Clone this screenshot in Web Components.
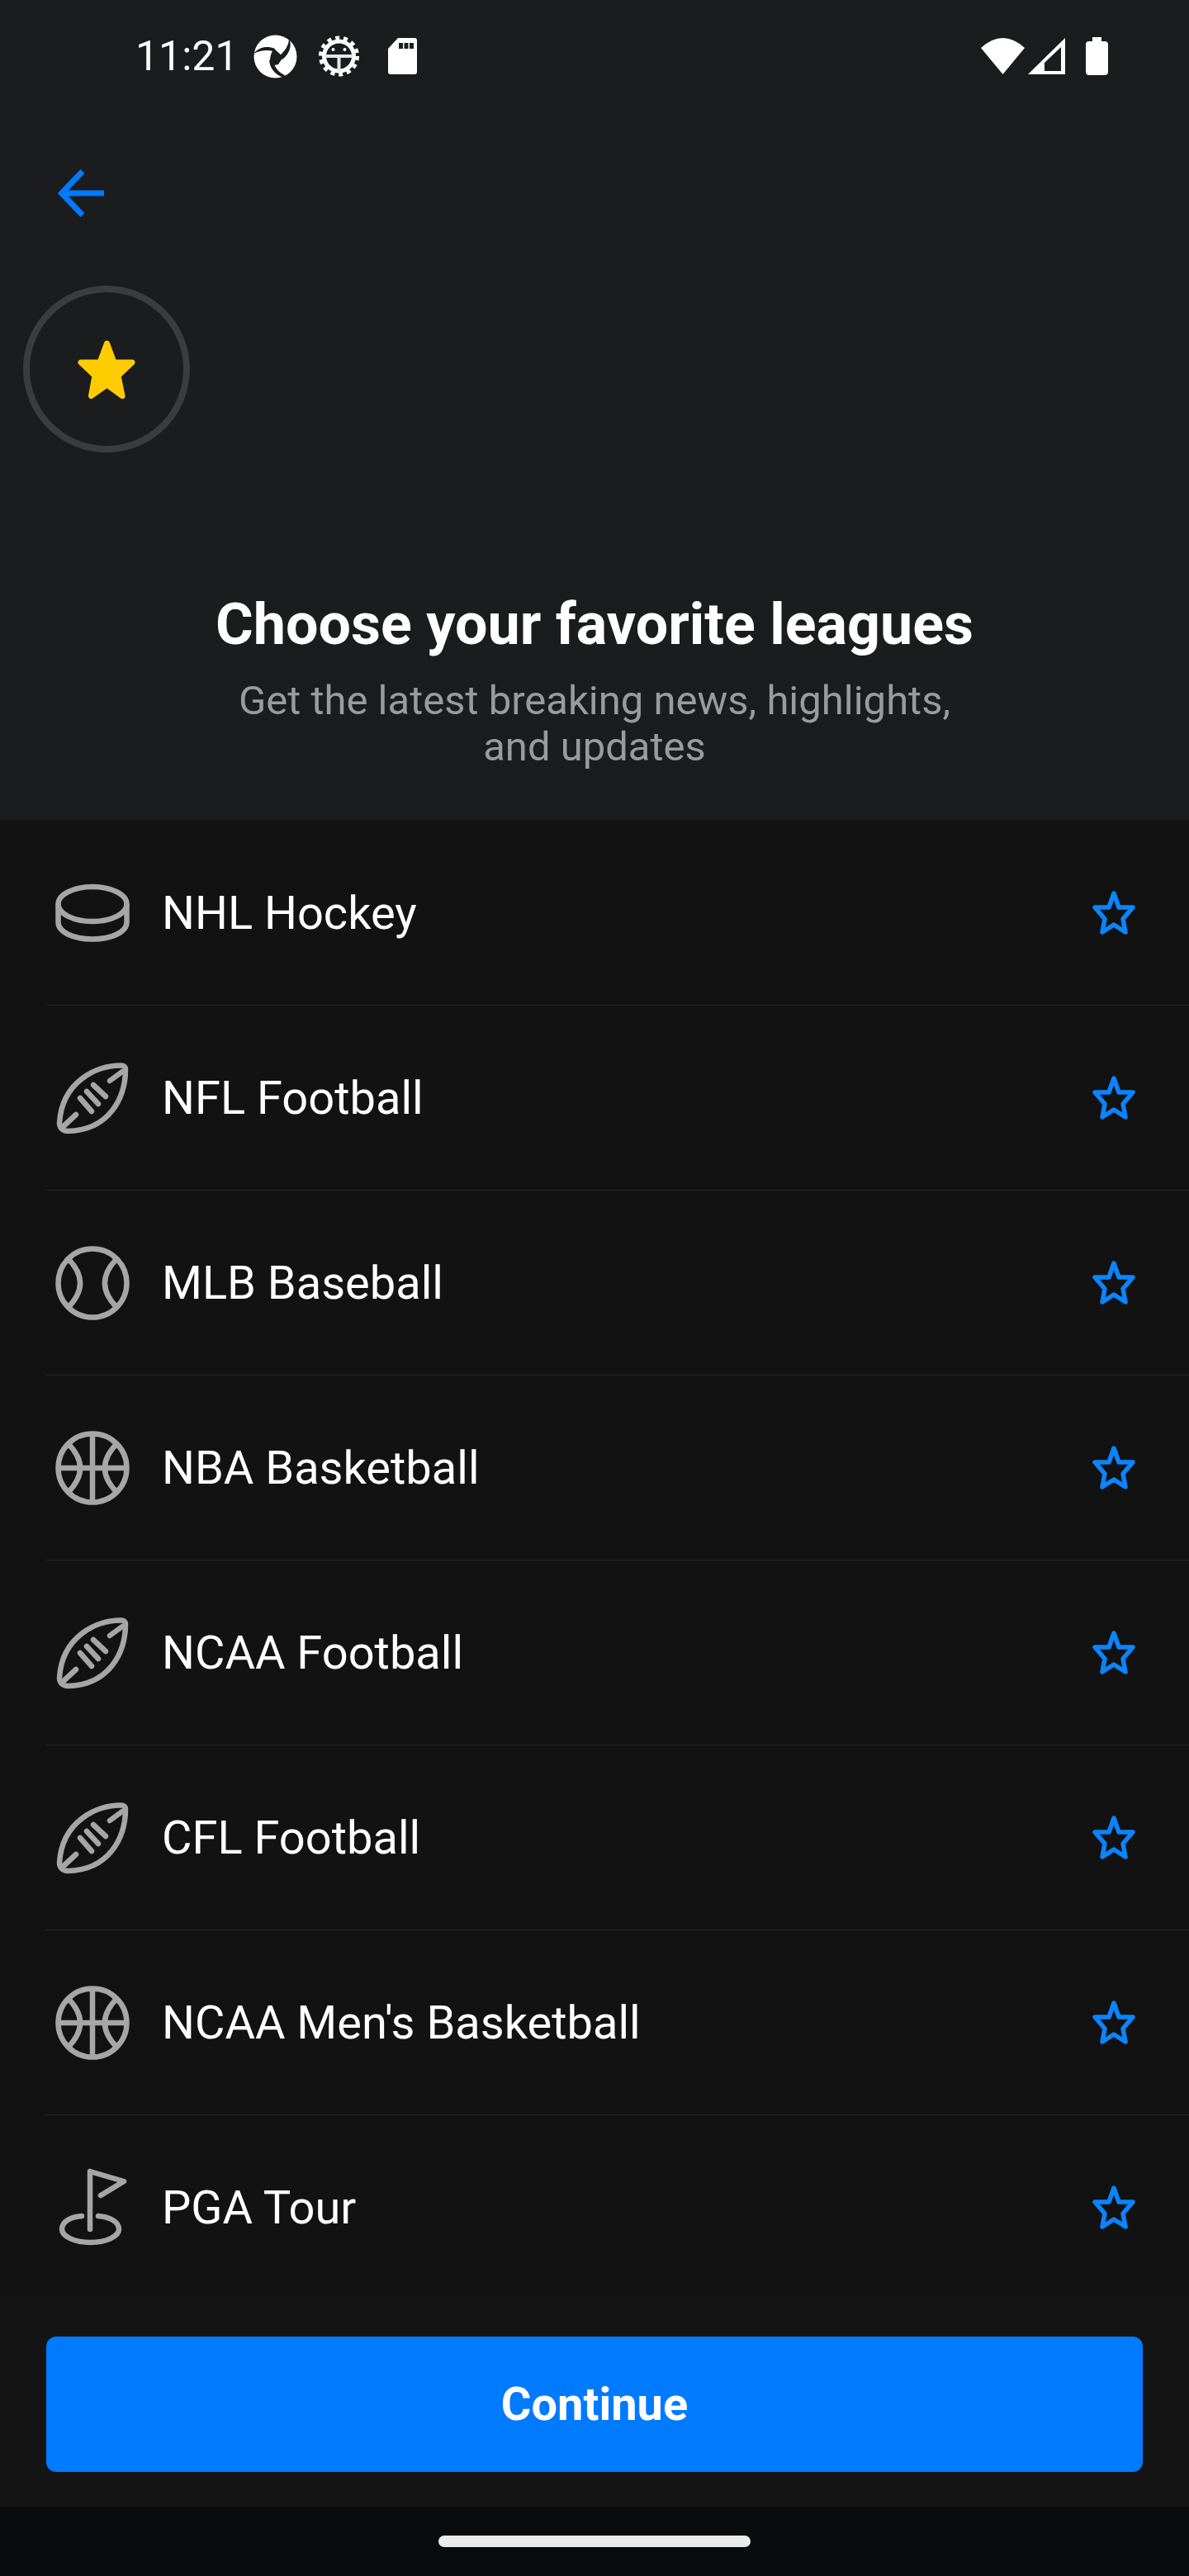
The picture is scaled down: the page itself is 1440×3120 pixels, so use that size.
<!DOCTYPE html>
<html>
<head>
<meta charset="utf-8">
<title>Choose your favorite leagues</title>
<style>
	html, body {
		margin: 0;
		background: #121212;
		font-family: Roboto, "Liberation Sans", sans-serif;
	}
</style>
</head>
<body>

<league-screen>
	<status-bar slot="top" time="11:21"></status-bar>
	<back-bar slot="top"></back-bar>
	<league-hero slot="top" heading="Choose your favorite leagues">Get the latest breaking news, highlights,<br>and updates</league-hero>

	<league-row icon="puck">NHL Hockey</league-row>
	<league-row icon="football">NFL Football</league-row>
	<league-row icon="baseball">MLB Baseball</league-row>
	<league-row icon="basketball">NBA Basketball</league-row>
	<league-row icon="football">NCAA Football</league-row>
	<league-row icon="football">CFL Football</league-row>
	<league-row icon="basketball">NCAA Men's Basketball</league-row>
	<league-row icon="golf" last>PGA Tour</league-row>

	<continue-bar slot="bottom">Continue</continue-bar>
	<nav-pill slot="bottom"></nav-pill>
</league-screen>

<script>
// ===== ICONS =====

const SPORT_ICONS = {
	puck: `
		<ellipse cx="45" cy="34" rx="41.5" ry="21"/>
		<path d="M3.5 34V56C3.5 68 22 76.5 45 76.5S86.5 68 86.5 56V34"/>`,
	football: `
		<path d="M80 5.5C50 5 8 25 5 75C5 81 9 85 15 85C65 84 85 45 85 10C85 7 83 5.5 80 5.5Z"/>
		<path d="M81 13L66 24M10 79L25 65M46 29L61 43M38 37L52 52M30 45L44 61" stroke-linecap="round"/>`,
	baseball: `
		<circle cx="45" cy="45" r="41.5"/>
		<path d="M15 15Q45 45 15 75M75 15Q45 45 75 75"/>`,
	basketball: `
		<circle cx="45" cy="45" r="41.5"/>
		<path d="M15 15Q45 45 15 75M75 15Q45 45 75 75M45 3.5V86.5M3.5 45H86.5"/>`,
	golf: `
		<path d="M42 1V71M42 1L83 13L55 30" stroke-linecap="round" stroke-linejoin="round"/>
		<path d="M32 55C18 56 8 62 8 71C8 80 24 87 42.5 87S77 80 77 71C77 62 66 56 52 55" stroke-linecap="round"/>`
}

// ===== ELEMENTS =====

class LeagueScreen extends HTMLElement {
	connectedCallback(){
		this.attachShadow({ mode: 'open' }).innerHTML = `
		<style>
			:host {
				display: block;
				width: 1440px;
				height: 3120px;
				overflow: hidden;
				background: #121212;
			}
			.top {
				height: 993px;
				background: #1b1c1e;
			}
			.list {
				padding-top: 1px;
				height: 1792px;
				box-sizing: border-box;
			}
		</style>
		<div class="top"><slot name="top"></slot></div>
		<div class="list"><slot></slot></div>
		<slot name="bottom"></slot>`
	}
}

class StatusBar extends HTMLElement {
	connectedCallback(){
		this.attachShadow({ mode: 'open' }).innerHTML = `
		<style>
			:host {
				display: flex;
				align-items: center;
				height: 136px;
				padding: 0 98px 0 164px;
				box-sizing: border-box;
				color: #fff;
			}
			.time {
				font-size: 50px;
				width: 143px;
				line-height: 1;
			}
			svg {
				display: block;
				fill: #fff;
				flex: none;
			}
			.spacer {
				flex: 1;
			}
		</style>
		<span class="time">${this.getAttribute('time')}</span>
		<svg width="53" height="53" viewBox="0 0 53 53">
			<circle cx="26.5" cy="26.5" r="26"/>
			<path fill="#1b1c1e" d="M25 17L36 27L30 36L21 38C19 31 20 23 25 17Z"/>
			<path fill="#1b1c1e" d="M43 4C47 13 44 23 35 30L31 26C38 20 43 13 43 4Z"/>
			<path fill="#1b1c1e" d="M0 23C7 15 16 13 26 17L24 20C16 18 8 19 0 23Z"/>
			<path fill="#1b1c1e" d="M19 31C20 41 26 48 36 52L38 49C31 46 25 40 24 31Z"/>
		</svg>
		<svg width="49" height="50" viewBox="0 0 49 50" style="margin-left:26px">
			<circle cx="24.5" cy="25" r="18" fill="none" stroke="#fff" stroke-width="5"/>
			<circle cx="24.5" cy="25" r="22" fill="none" stroke="#fff" stroke-width="5" stroke-dasharray="5 4.87"/>
			<rect x="8" y="23" width="33" height="4" fill="#e6e6e6"/>
			<rect x="22.5" y="25" width="4" height="19" fill="#e6e6e6"/>
			<circle cx="17.5" cy="17" r="2"/>
			<circle cx="31.5" cy="17" r="2"/>
		</svg>
		<svg width="35" height="44" viewBox="0 0 35 44" style="margin-left:35px">
			<path fill-rule="evenodd" d="M12 0H32A3 3 0 0 1 35 3V41A3 3 0 0 1 32 44H3A3 3 0 0 1 0 41V13ZM13 6V13H18V6ZM19.500 6V13H24.500V6ZM26 6V13H31V6Z"/>
		</svg>
		<span class="spacer"></span>
		<svg width="53" height="44" viewBox="0 0 53 44">
			<path d="M26.500 44L0 12Q26.500 -12 53 12Z"/>
		</svg>
		<svg width="45" height="44" viewBox="0 0 45 44" style="margin-left:4px">
			<path fill-rule="evenodd" d="M45 0V44H0ZM40 11L20 30V40H40Z"/>
		</svg>
		<svg width="27" height="46" viewBox="0 0 27 46" style="margin-left:25px">
			<path d="M8 0H19V5H23A4 4 0 0 1 27 9V42A4 4 0 0 1 23 46H4A4 4 0 0 1 0 42V9A4 4 0 0 1 4 5H8Z"/>
		</svg>`
	}
}

class BackBar extends HTMLElement {
	connectedCallback(){
		this.attachShadow({ mode: 'open' }).innerHTML = `
		<style>
			:host {
				display: flex;
				align-items: center;
				height: 196px;
				padding-left: 70px;
			}
			svg {
				display: block;
				fill: none;
				stroke: #007aff;
				stroke-width: 7;
			}
		</style>
		<svg width="56" height="58" viewBox="0 0 56 58">
			<path d="M56 29H4M30 2.500L4.500 29L30 55.500"/>
		</svg>`
	}
}

class LeagueHero extends HTMLElement {
	connectedCallback(){
		this.attachShadow({ mode: 'open' }).innerHTML = `
		<style>
			:host {
				display: block;
				padding-top: 14px;
			}
			.badge {
				width: 202px;
				height: 202px;
				margin-left: 28px;
				box-sizing: border-box;
				border: 8px solid #3b3c3e;
				border-radius: 50%;
				display: flex;
				align-items: center;
				justify-content: center;
			}
			svg {
				display: block;
				fill: #ffcc00;
				stroke: #ffcc00;
				stroke-width: 7;
				stroke-linejoin: round;
			}
			h1 {
				margin: 172px 0 0;
				font-size: 70px;
				font-weight: 700;
				line-height: 72px;
				text-align: center;
				color: #fff;
			}
			p {
				margin: 29px 0 0;
				font-size: 49px;
				line-height: 56px;
				text-align: center;
				color: #9b9b9b;
			}
		</style>
		<div class="badge">
			<svg width="70" height="71" viewBox="0 0 70 71">
				<path d="M35.500 4L44 27H66L49 43L54 67.500L35.500 54L16.500 67.500L21 43L4 27H27Z"/>
			</svg>
		</div>
		<h1>${this.getAttribute('heading')}</h1>
		<p><slot></slot></p>`
	}
}

class LeagueRow extends HTMLElement {
	connectedCallback(){
		const sport = SPORT_ICONS[this.getAttribute('icon')]
		this.attachShadow({ mode: 'open' }).innerHTML = `
		<style>
			:host {
				display: flex;
				align-items: center;
				height: 224px;
				margin-left: 56px;
				padding: 0 61px 0 11px;
				box-sizing: border-box;
				border-bottom: 1px solid #262626;
				color: #fff;
				font-size: 56px;
			}
			:host([last]) {
				border-bottom: none;
			}
			svg {
				display: block;
				flex: none;
				overflow: visible;
				fill: none;
			}
			.sport {
				stroke: #a6a6a6;
				stroke-width: 6.500;
			}
			.name {
				flex: 1;
				margin-left: 39px;
			}
			.star {
				stroke: #0a84ff;
				stroke-width: 5.500;
				stroke-linejoin: round;
			}
		</style>
		<svg class="sport" width="90" height="90" viewBox="0 0 90 90">${sport}</svg>
		<span class="name"><slot></slot></span>
		<svg class="star" width="60" height="60" viewBox="0 0 60 60">
			<path d="M30 6L36 23H53L41 37L44 53L30 44L16 53L19 37L7 23H24Z"/>
		</svg>`
	}
}

class ContinueBar extends HTMLElement {
	connectedCallback(){
		this.attachShadow({ mode: 'open' }).innerHTML = `
		<style>
			:host {
				display: block;
				height: 251px;
				padding: 45px 56px 0;
				box-sizing: border-box;
				background: #141414;
			}
			button {
				display: block;
				width: 100%;
				height: 164px;
				border: none;
				border-radius: 12px;
				background: #007aff;
				color: #fff;
				font: 700 56px Roboto, "Liberation Sans", sans-serif;
			}
		</style>
		<button><slot></slot></button>`
	}
}

class NavPill extends HTMLElement {
	connectedCallback(){
		this.attachShadow({ mode: 'open' }).innerHTML = `
		<style>
			:host {
				display: flex;
				justify-content: center;
				height: 84px;
				padding-top: 35px;
				box-sizing: border-box;
				background: #0a0b0d;
			}
			div {
				width: 378px;
				height: 14px;
				border-radius: 7px;
				background: #ebebeb;
			}
		</style>
		<div></div>`
	}
}

customElements.define('league-screen', LeagueScreen)
customElements.define('status-bar', StatusBar)
customElements.define('back-bar', BackBar)
customElements.define('league-hero', LeagueHero)
customElements.define('league-row', LeagueRow)
customElements.define('continue-bar', ContinueBar)
customElements.define('nav-pill', NavPill)
</script>
</body>
</html>
